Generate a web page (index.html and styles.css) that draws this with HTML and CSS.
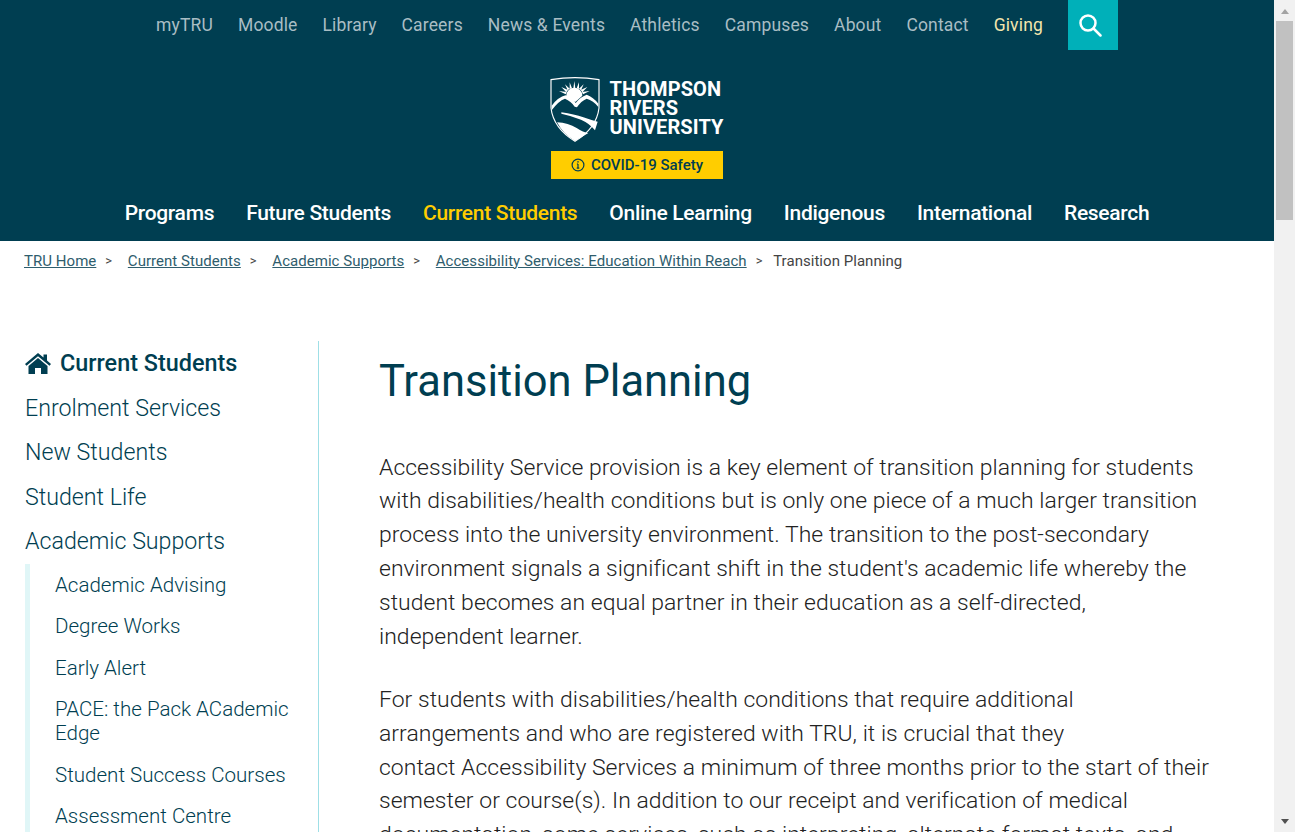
FILE: index.html
```html
<!DOCTYPE html>
<html lang="en">
<head>
<meta charset="utf-8">
<title>Transition Planning</title>
<link rel="stylesheet" href="styles.css">
</head>
<body>
<div class="page">
  <div class="viewport">
    <header class="site-header">
      <nav class="top-nav">
        <a>myTRU</a><a>Moodle</a><a>Library</a><a>Careers</a><a>News &amp; Events</a><a>Athletics</a><a>Campuses</a><a>About</a><a>Contact</a><a class="giving">Giving</a>
        <span class="search-btn">
          <svg class="search-icon" width="23" height="23" viewBox="0 0 23 23" fill="none" stroke="#fff" stroke-width="2.500"><circle cx="9" cy="9" r="7.500"/><path d="M14.500 14.500l7 7" stroke-linecap="round"/></svg>
        </span>
      </nav>
      <div class="logo">
        <svg class="shield" width="50" height="65" viewBox="15 12 150 195">
          <path d="M18 20Q90 8 162 20V105Q155 165 90 205Q25 165 18 105Z" fill="none" stroke="#fff" stroke-width="3.500"/>
          <path d="M64 68A24 24 0 0 1 112 68L92 86H84Z" fill="#fff"/>
          <path d="M85 46L88 24L91 46ZM74 48L74 28L81 46ZM102 48L102 28L95 46ZM68 52L60 34L74 47ZM108 52L116 34L102 47ZM64 58L49 42L69 51ZM112 58L127 42L107 51ZM62 64L42 54L65 57ZM114 64L134 54L111 57Z" fill="#fff"/>
          <path d="M20 98Q40 72 62 67Q80 72 92 90Q105 72 125 65Q145 72 160 92V102Q145 82 125 77Q108 84 96 103L89 101Q78 84 60 77Q40 84 20 112Z" fill="#fff"/>
          <path d="M49 118Q88 124 115 133Q140 142 158 146L150 172Q135 152 108 140Q78 128 49 122Z" fill="#fff"/>
          <path d="M36 148Q70 150 95 165Q115 178 130 180L90 204Q55 184 36 148Z" fill="#fff"/>
        </svg>
        <div class="wordmark">THOMPSON<br>RIVERS<br>UNIVERSITY</div>
      </div>
      <a class="covid">
        <svg width="14" height="14" viewBox="0 0 14 14" fill="none" stroke="#003e51" stroke-width="1.200"><circle cx="7" cy="7" r="5.900"/><path d="M7 6v4.200M5.700 10.200h2.600M5.900 6h1.100" /><path d="M7 3.300v1.300" stroke-width="1.500"/></svg>
        <span>COVID-19 Safety</span>
      </a>
      <nav class="main-nav">
        <a>Programs</a><a>Future Students</a><a class="active">Current Students</a><a>Online Learning</a><a>Indigenous</a><a>International</a><a>Research</a>
      </nav>
    </header>
    <div class="breadcrumbs">
      <a>TRU Home</a><span class="sep">&gt;</span><a>Current Students</a><span class="sep">&gt;</span><a>Academic Supports</a><span class="sep">&gt;</span><a>Accessibility Services: Education Within Reach</a><span class="sep">&gt;</span><span class="crumb-current">Transition Planning</span>
    </div>
    <div class="content">
      <aside class="sidebar">
        <a class="side-home">
          <svg width="26" height="21" viewBox="0 0 26 21" fill="#003e51"><path d="M13 0L0 11l1.500 1.800L13 3.200l11.500 9.600L26 11l-4-3.400V1.500h-3.500v3.100z"/><path d="M13 5L3.500 13v8H10v-6h6v6h6.500v-8z"/></svg>
          <span>Current Students</span>
        </a>
        <a class="side-link">Enrolment Services</a>
        <a class="side-link">New Students</a>
        <a class="side-link">Student Life</a>
        <a class="side-link">Academic Supports</a>
        <div class="side-sub">
          <a>Academic Advising</a>
          <a>Degree Works</a>
          <a>Early Alert</a>
          <a>PACE: the Pack ACademic Edge</a>
          <a>Student Success Courses</a>
          <a>Assessment Centre</a>
        </div>
      </aside>
      <main class="article">
        <h1>Transition Planning</h1>
        <p>Accessibility Service provision is a key element of transition planning for students with disabilities/health conditions but is only one piece of a much larger transition process into the university environment. The transition to the post-secondary environment signals a significant shift in the student's academic life whereby the student becomes an equal partner in their education as a self-directed, independent learner.</p>
        <p>For students with disabilities/health conditions that require additional arrangements and who are registered with TRU, it is crucial that they<br>contact Accessibility Services a minimum of three months prior to the start of their semester or course(s). In addition to our receipt and verification of medical documentation, some services, such as interpreting, alternate format texts, and</p>
      </main>
    </div>
  </div>
  <div class="scrollbar">
    <span class="arrow-up"></span>
    <span class="thumb"></span>
    <span class="arrow-down"></span>
  </div>
</div>
</body>
</html>
```
FILE: styles.css
```css
* { box-sizing: border-box; }
html, body { margin: 0; height: 832px; overflow: hidden; background: #fff; }
body { font-family: Roboto, "Liberation Sans", sans-serif; color: #333; }
.page { display: flex; height: 832px; }
.viewport { width: 1274px; height: 832px; overflow: hidden; }

.site-header { background: #003e51; height: 241px; display: flex; flex-direction: column; align-items: center; }
.top-nav { display: flex; align-items: center; gap: 25px; height: 50px; font-size: 17.500px; letter-spacing: .15px; color: #a9bdc4; }
.top-nav .giving { color: #f3e6ad; }
.search-btn { width: 50px; height: 50px; background: #00b0b9; display: flex; align-items: center; justify-content: center; padding-right: 4px; }

.logo { display: flex; align-items: center; gap: 9px; margin-top: 27px; height: 65px; }
.shield { display: block; }
.wordmark { font-family: Roboto, "Liberation Sans", sans-serif; font-weight: 700; font-size: 20px; line-height: 19px; letter-spacing: .1px; color: #fff; margin-top: -3px; }

.covid { display: flex; align-items: center; justify-content: center; gap: 6px; width: 172px; height: 28px; margin-top: 9px; background: #ffcd00; color: #003e51; font-size: 15px; font-weight: 500; }
.main-nav { display: flex; gap: 32px; margin-top: 20px; font-size: 21px; font-weight: 500; letter-spacing: -.3px; color: #fff; line-height: 28px; }
.main-nav .active { color: #ffcd00; }

.breadcrumbs { display: flex; align-items: center; height: 39px; padding: 0 0 0 24px; font-size: 15px; letter-spacing: .04px; color: #444; }
.breadcrumbs a { color: #2f5d6d; text-decoration: underline; }
.sep { width: 31.500px; padding-left: 9px; font-size: 13px; }
.crumb-current { margin-left: -5px; }

.content { display: flex; padding: 61px 0 0 25px; height: 552px; }
.sidebar { width: 294px; border-right: 1px solid #9fdfe6; padding-top: 4px; flex: none; }
.side-home { display: flex; align-items: center; gap: 9px; height: 36px; margin-bottom: 1px; font-size: 23.400px; font-weight: 500; color: #003e51; }
.side-link { display: block; margin-top: 8.500px; height: 36px; line-height: 36px; font-size: 23.200px; font-weight: 300; color: #003e51; }
.side-sub { margin-top: 5px; border-left: 5px solid #e0f6f7; padding: 9px 20px 0 25px; height: 300px; display: flex; flex-direction: column; gap: 17.400px; font-size: 20.550px; font-weight: 300; line-height: 24px; color: #003e51; }

.article { width: 833px; margin-left: 60px; }
.article h1 { margin: 12px 0 0; font-size: 43.500px; font-weight: 400; line-height: 58px; color: #003e51; }
.article p { margin: 0; font-size: 22.950px; font-weight: 300; letter-spacing: .04px; line-height: 33.800px; color: #222; }
.article h1 + p { margin-top: 39.700px; }
.article p + p { margin-top: 29.600px; }

.scrollbar { width: 21px; height: 832px; background: #f1f1f1; display: flex; flex-direction: column; align-items: center; }
.arrow-up { width: 0; height: 0; margin-top: 9px; border: 4.500px solid transparent; border-top: 0; border-bottom: 5px solid #a3a3a3; }
.thumb { width: 17px; height: 199px; margin-top: 7px; background: #c1c1c1; }
.arrow-down { width: 0; height: 0; margin-top: auto; margin-bottom: 8px; border: 4.500px solid transparent; border-bottom: 0; border-top: 5px solid #505050; }
```
